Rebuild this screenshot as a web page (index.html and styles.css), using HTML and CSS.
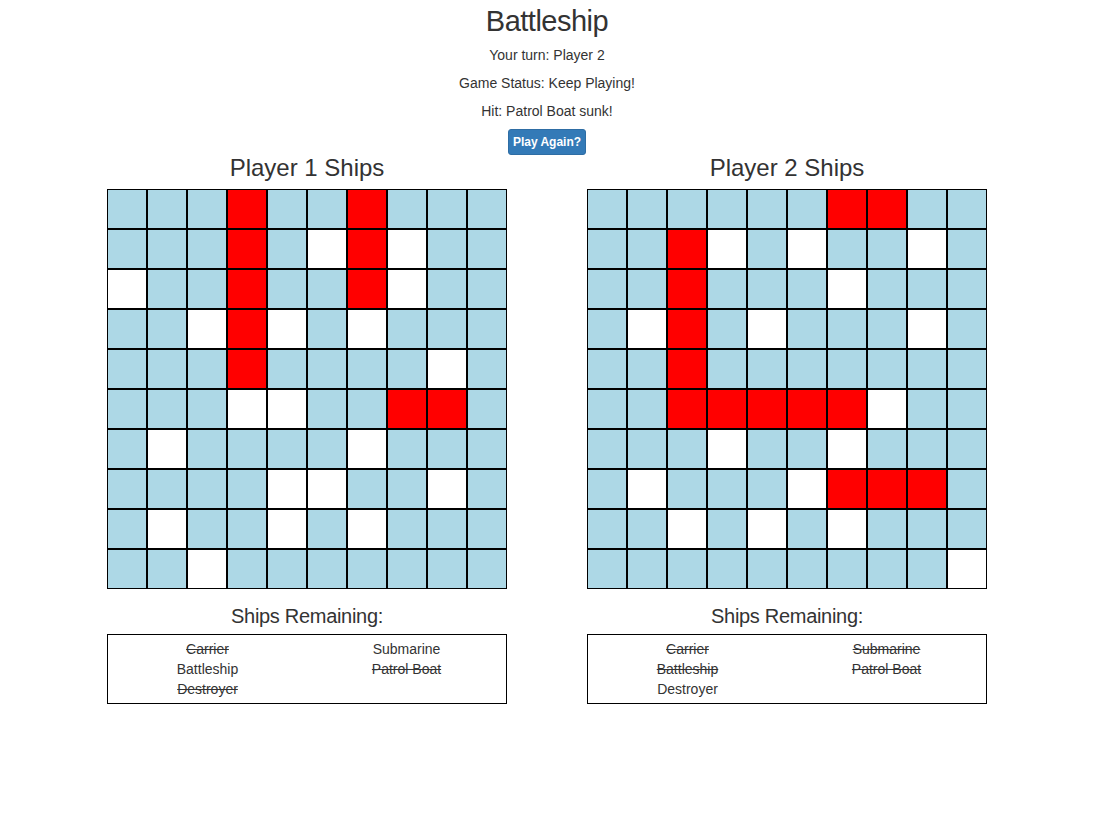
FILE: index.html
```html
<!DOCTYPE html>
<html lang="en">
<head>
<meta charset="utf-8">
<title>Battleship</title>
<link rel="stylesheet" href="styles.css">
</head>
<body>
<div class="page">
  <h1 class="title">Battleship</h1>
  <p class="status">Your turn: Player 2</p>
  <p class="status">Game Status: Keep Playing!</p>
  <p class="status">Hit: Patrol Boat sunk!</p>
  <button class="btn-again" type="button">Play Again?</button>
  <div class="boards">
    <section class="board">
      <h3 class="board-title">Player 1 Ships</h3>
      <div class="grid">
        <div class="cell"></div><div class="cell"></div><div class="cell"></div><div class="cell hit"></div><div class="cell"></div><div class="cell"></div><div class="cell hit"></div><div class="cell"></div><div class="cell"></div><div class="cell"></div>
        <div class="cell"></div><div class="cell"></div><div class="cell"></div><div class="cell hit"></div><div class="cell"></div><div class="cell miss"></div><div class="cell hit"></div><div class="cell miss"></div><div class="cell"></div><div class="cell"></div>
        <div class="cell miss"></div><div class="cell"></div><div class="cell"></div><div class="cell hit"></div><div class="cell"></div><div class="cell"></div><div class="cell hit"></div><div class="cell miss"></div><div class="cell"></div><div class="cell"></div>
        <div class="cell"></div><div class="cell"></div><div class="cell miss"></div><div class="cell hit"></div><div class="cell miss"></div><div class="cell"></div><div class="cell miss"></div><div class="cell"></div><div class="cell"></div><div class="cell"></div>
        <div class="cell"></div><div class="cell"></div><div class="cell"></div><div class="cell hit"></div><div class="cell"></div><div class="cell"></div><div class="cell"></div><div class="cell"></div><div class="cell miss"></div><div class="cell"></div>
        <div class="cell"></div><div class="cell"></div><div class="cell"></div><div class="cell miss"></div><div class="cell miss"></div><div class="cell"></div><div class="cell"></div><div class="cell hit"></div><div class="cell hit"></div><div class="cell"></div>
        <div class="cell"></div><div class="cell miss"></div><div class="cell"></div><div class="cell"></div><div class="cell"></div><div class="cell"></div><div class="cell miss"></div><div class="cell"></div><div class="cell"></div><div class="cell"></div>
        <div class="cell"></div><div class="cell"></div><div class="cell"></div><div class="cell"></div><div class="cell miss"></div><div class="cell miss"></div><div class="cell"></div><div class="cell"></div><div class="cell miss"></div><div class="cell"></div>
        <div class="cell"></div><div class="cell miss"></div><div class="cell"></div><div class="cell"></div><div class="cell miss"></div><div class="cell"></div><div class="cell miss"></div><div class="cell"></div><div class="cell"></div><div class="cell"></div>
        <div class="cell"></div><div class="cell"></div><div class="cell miss"></div><div class="cell"></div><div class="cell"></div><div class="cell"></div><div class="cell"></div><div class="cell"></div><div class="cell"></div><div class="cell"></div>
      </div>
      <h4 class="remaining-title">Ships Remaining:</h4>
      <ul class="ships">
        <li class="sunk">Carrier</li>
        <li>Battleship</li>
        <li class="sunk">Destroyer</li>
        <li>Submarine</li>
        <li class="sunk">Patrol Boat</li>
      </ul>
    </section>
    <section class="board">
      <h3 class="board-title">Player 2 Ships</h3>
      <div class="grid">
        <div class="cell"></div><div class="cell"></div><div class="cell"></div><div class="cell"></div><div class="cell"></div><div class="cell"></div><div class="cell hit"></div><div class="cell hit"></div><div class="cell"></div><div class="cell"></div>
        <div class="cell"></div><div class="cell"></div><div class="cell hit"></div><div class="cell miss"></div><div class="cell"></div><div class="cell miss"></div><div class="cell"></div><div class="cell"></div><div class="cell miss"></div><div class="cell"></div>
        <div class="cell"></div><div class="cell"></div><div class="cell hit"></div><div class="cell"></div><div class="cell"></div><div class="cell"></div><div class="cell miss"></div><div class="cell"></div><div class="cell"></div><div class="cell"></div>
        <div class="cell"></div><div class="cell miss"></div><div class="cell hit"></div><div class="cell"></div><div class="cell miss"></div><div class="cell"></div><div class="cell"></div><div class="cell"></div><div class="cell miss"></div><div class="cell"></div>
        <div class="cell"></div><div class="cell"></div><div class="cell hit"></div><div class="cell"></div><div class="cell"></div><div class="cell"></div><div class="cell"></div><div class="cell"></div><div class="cell"></div><div class="cell"></div>
        <div class="cell"></div><div class="cell"></div><div class="cell hit"></div><div class="cell hit"></div><div class="cell hit"></div><div class="cell hit"></div><div class="cell hit"></div><div class="cell miss"></div><div class="cell"></div><div class="cell"></div>
        <div class="cell"></div><div class="cell"></div><div class="cell"></div><div class="cell miss"></div><div class="cell"></div><div class="cell"></div><div class="cell miss"></div><div class="cell"></div><div class="cell"></div><div class="cell"></div>
        <div class="cell"></div><div class="cell miss"></div><div class="cell"></div><div class="cell"></div><div class="cell"></div><div class="cell miss"></div><div class="cell hit"></div><div class="cell hit"></div><div class="cell hit"></div><div class="cell"></div>
        <div class="cell"></div><div class="cell"></div><div class="cell miss"></div><div class="cell"></div><div class="cell miss"></div><div class="cell"></div><div class="cell miss"></div><div class="cell"></div><div class="cell"></div><div class="cell"></div>
        <div class="cell"></div><div class="cell"></div><div class="cell"></div><div class="cell"></div><div class="cell"></div><div class="cell"></div><div class="cell"></div><div class="cell"></div><div class="cell"></div><div class="cell miss"></div>
      </div>
      <h4 class="remaining-title">Ships Remaining:</h4>
      <ul class="ships">
        <li class="sunk">Carrier</li>
        <li class="sunk">Battleship</li>
        <li>Destroyer</li>
        <li class="sunk">Submarine</li>
        <li class="sunk">Patrol Boat</li>
      </ul>
    </section>
  </div>
</div>
</body>
</html>
```
FILE: styles.css
```css
html, body {
  margin: 0;
  padding: 0;
  background: #fff;
}

body {
  font-family: "Liberation Sans", Arial, Helvetica, sans-serif;
  font-size: 14px;
  line-height: 20px;
  color: #333;
}

.page {
  padding-right: 7px;
  display: flex;
  flex-direction: column;
  align-items: center;
  text-align: center;
}

.title {
  font-size: 29px;
  line-height: 33px;
  font-weight: 400;
  letter-spacing: -0.5px;
  margin: 5px 0 7px;
}

.status {
  margin: 0 0 8px;
}

.btn-again {
  font-family: inherit;
  font-size: 12px;
  font-weight: 700;
  color: #fff;
  background: #337ab7;
  border: 1px solid #2e6da4;
  border-radius: 3px;
  height: 26px;
  padding: 0 4px;
  line-height: 24px;
  cursor: pointer;
}

.boards {
  display: flex;
  gap: 80px;
  justify-content: center;
}

.board {
  width: 400px;
  display: flex;
  flex-direction: column;
  align-items: stretch;
}

.board-title {
  font-size: 24px;
  line-height: 26px;
  font-weight: 400;
  margin: 0 0 8px;
}

.grid {
  display: grid;
  grid-template-columns: repeat(10, 40px);
  grid-auto-rows: 40px;
}

.cell {
  box-sizing: border-box;
  border: 1px solid #000;
  background: lightblue;
}

.cell.hit {
  background: #ff0000;
}

.cell.miss {
  background: #fff;
}

.remaining-title {
  font-size: 20px;
  line-height: 22px;
  font-weight: 400;
  letter-spacing: -0.3px;
  margin: 16px 0 7px;
}

.ships {
  list-style: none;
  margin: 0;
  padding: 4px 0;
  border: 1px solid #000;
  display: grid;
  grid-template-columns: 1fr 1fr;
  grid-template-rows: repeat(3, 20px);
  grid-auto-flow: column;
}

.ships li {
  line-height: 20px;
}

.ships .sunk {
  text-decoration: line-through;
}
```
